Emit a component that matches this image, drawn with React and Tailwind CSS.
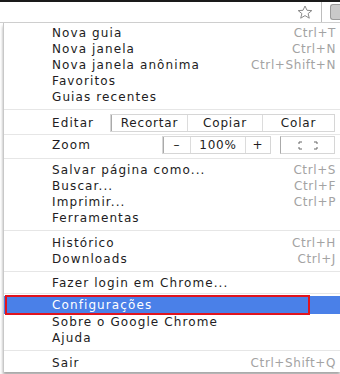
import React from "react";

const font = { fontFamily: '"DejaVu Sans", Verdana, sans-serif' };

// Single menu row with optional keyboard shortcut
const Item = ({ label, shortcut }) => (
  <div className="flex h-4 items-center justify-between pl-[48px] pr-1">
    <span className="text-[#221c22]">{label}</span>
    {shortcut && <span className="tracking-[0.6px] text-[#a3a3a3]">{shortcut}</span>}
  </div>
);

const Sep = ({ className = "my-[4px]" }) => <div className={`h-px bg-[#e6e6e6] ${className}`} />;

const App = () => {
  return (
    <div className="h-[374px] w-[340px] overflow-hidden bg-white text-[12px] tracking-[1.1px]" style={font}>
      {/* top of the toolbar */}
      <div className="h-[2px] bg-[#1a1a1a]" />
      <div className="flex h-[21px] items-stretch border-b border-[#cfcfcf]">
        <div className="flex flex-1 items-center justify-end border-r border-[#bdbdbd] pr-2">
          <svg width="16" height="14" viewBox="0 0 16 14" fill="none" stroke="#8a8a8a" strokeWidth="1">
            <path d="M8 1 L10 5.3 L14.8 5.6 L11.1 8.6 L12.3 13.2 L8 10.6 L3.7 13.2 L4.9 8.6 L1.2 5.6 L6 5.3 Z" />
          </svg>
        </div>
        <div className="w-[8px]" />
        <div className="my-[2px] w-[10px] rounded-l-[3px] border border-r-0 border-[#9a9a9a] bg-[#c9c9c9]" />
      </div>

      {/* menu */}
      <div className="ml-[3px] border-l border-[#c8c8c8] pb-[1px] pt-[2px] shadow-[0_3px_3px_rgba(0,0,0,0.35)]">
        <Item label="Nova guia" shortcut="Ctrl+T" />
        <Item label="Nova janela" shortcut="Ctrl+N" />
        <Item label="Nova janela anônima" shortcut="Ctrl+Shift+N" />
        <Item label="Favoritos" />
        <Item label="Guias recentes" />
        <Sep />
        <div className="flex h-[18px] items-stretch pl-[48px] pr-[5px]">
          <span className="flex w-[58px] items-center text-[#221c22]">Editar</span>
          <div className="flex flex-1 border border-[#d6d6d6] tracking-[0.8px] text-[#221c22]">
            <div className="flex w-[76px] items-center justify-center border-l border-[#aaaaaa]">Recortar</div>
            <div className="flex w-[75px] items-center justify-center border-l border-[#dcdcdc]">Copiar</div>
            <div className="flex flex-1 items-center justify-center border-l border-[#dcdcdc]">Colar</div>
          </div>
        </div>
        <Sep className="my-[1.5px]" />
        <div className="flex h-[18px] items-stretch pl-[48px] pr-[5px]">
          <span className="flex flex-1 items-center text-[#221c22]">Zoom</span>
          <div className="flex border border-[#d6d6d6] tracking-[0.8px] text-[#221c22]">
            <div className="flex w-[27px] items-center justify-center border-l border-[#aaaaaa]">–</div>
            <div className="flex w-[55px] items-center justify-center border-l border-[#dcdcdc]">100%</div>
            <div className="flex w-[25px] items-center justify-center border-l border-[#dcdcdc]">+</div>
          </div>
          <div className="ml-[9px] flex w-[55px] items-center justify-center border border-[#d6d6d6] border-l-[#aaaaaa]">
            <svg width="20" height="9" viewBox="0 0 20 9" fill="none" stroke="#666" strokeWidth="1">
              <path d="M1 3V1h3M16 1h3v2M1 6v2h3M16 8h3V6" />
            </svg>
          </div>
        </div>
        <Sep className="my-[3.5px]" />
        <Item label="Salvar página como..." shortcut="Ctrl+S" />
        <Item label="Buscar..." shortcut="Ctrl+F" />
        <Item label="Imprimir..." shortcut="Ctrl+P" />
        <Item label="Ferramentas" />
        <Sep />
        <Item label="Histórico" shortcut="Ctrl+H" />
        <Item label="Downloads" shortcut="Ctrl+J" />
        <Sep className="my-[3.5px]" />
        <Item label="Fazer login em Chrome..." />
        <Sep className="my-[2px]" />
        <div className="relative flex h-[18px] items-center bg-[#4a80e8] pl-[48px] text-white">
          Configurações
          <div className="absolute left-[1px] top-[-1px] h-[20px] w-[305px] border-2 border-[#e0141e]" />
        </div>
        <Item label="Sobre o Google Chrome" />
        <Item label="Ajuda" />
        <Sep />
        <Item label="Sair" shortcut="Ctrl+Shift+Q" />
      </div>
    </div>
  );
};

export default App;
